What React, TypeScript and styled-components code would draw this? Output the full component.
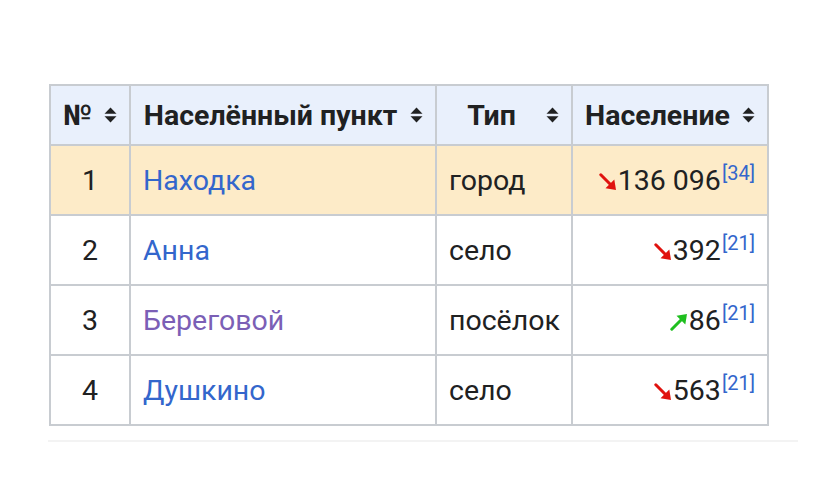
import React from "react";
import styled, { createGlobalStyle } from "styled-components";

const GlobalStyle = createGlobalStyle`
  html, body { margin: 0; padding: 0; background: #ffffff; }
  body { font-family: Roboto, "Noto Sans", "Liberation Sans", sans-serif; color: #202122; }
`;

const Page = styled.div`
  width: 816px;
  height: 504px;
  box-sizing: border-box;
  padding: 84px 0 0 49px;
  background: #fff;
`;

const Table = styled.table`
  border-collapse: collapse;
  table-layout: fixed;
  width: 718px;
  font-size: 28.5px;
  border: 2px solid #c8ccd1;
`;

const HeadCell = styled.th<{ $w: number }>`
  width: ${(p) => p.$w}px;
  height: 60px;
  padding: 0 12px;
  box-sizing: border-box;
  background: #e9f0fc;
  border: 2px solid #c8ccd1;
  font-weight: 700;
  color: #202122;
  white-space: nowrap;
`;

const HeadInner = styled.div`
  display: flex;
  align-items: center;
`;

const HeadLabel = styled.span`
  flex: 1;
  text-align: center;
`;

const SortIcon = styled.svg`
  flex: none;
  width: 13px;
  height: 16px;
  margin-left: 12px;
`;

const Row = styled.tr<{ $hl?: boolean }>`
  background: ${(p) => (p.$hl ? "#fdebc8" : "#ffffff")};
`;

const Cell = styled.td<{ $align?: "left" | "center" | "right" }>`
  height: 70px;
  padding: 0 12px;
  box-sizing: border-box;
  border: 2px solid #c8ccd1;
  text-align: ${(p) => p.$align ?? "left"};
  white-space: nowrap;
  color: #202122;
`;

const Link = styled.a<{ $visited?: boolean }>`
  color: ${(p) => (p.$visited ? "#7b5fb6" : "#3366cc")};
  text-decoration: none;
`;

const Ref = styled.sup`
  font-size: 20px;
  line-height: 1;
  color: #3366cc;
  vertical-align: 10px;
  margin-left: 1px;
`;

const Arrow = styled.svg`
  width: 18px;
  height: 18px;
  vertical-align: -1px;
  margin-right: 1px;
`;

const Divider = styled.div`
  width: 750px;
  height: 2px;
  margin-top: 14px;
  margin-left: -1px;
  background: #f3f3f3;
`;

const Sort = () => (
  <SortIcon viewBox="0 0 13 16">
    <path d="M0.5 6.8 L6.5 0.5 L12.5 6.8 Z" fill="#202122" />
    <path d="M0.5 9.2 L6.5 15.5 L12.5 9.2 Z" fill="#202122" />
  </SortIcon>
);

const Down = () => (
  <Arrow viewBox="0 0 18 18">
    <path d="M1.8 1.8 L12 12" stroke="#e0120e" strokeWidth="3" strokeLinecap="round" />
    <path d="M17 17 L6.5 15.3 L15.3 6.5 Z" fill="#e0120e" />
  </Arrow>
);

const Up = () => (
  <Arrow viewBox="0 0 18 18">
    <path d="M1.8 16.2 L12 6" stroke="#1fbf1f" strokeWidth="3" strokeLinecap="round" />
    <path d="M17 1 L6.5 2.7 L15.3 11.5 Z" fill="#1fbf1f" />
  </Arrow>
);

type Item = {
  n: number;
  name: string;
  visited?: boolean;
  type: string;
  pop: string;
  up?: boolean;
  ref: string;
  hl?: boolean;
};

const rows: Item[] = [
  { n: 1, name: "Находка", type: "город", pop: "136 096", ref: "34", hl: true },
  { n: 2, name: "Анна", type: "село", pop: "392", ref: "21" },
  { n: 3, name: "Береговой", visited: true, type: "посёлок", pop: "86", up: true, ref: "21" },
  { n: 4, name: "Душкино", type: "село", pop: "563", ref: "21" },
];

const headers: { label: string; w: number }[] = [
  { label: "№", w: 80 },
  { label: "Населённый пункт", w: 306 },
  { label: "Тип", w: 136 },
  { label: "Население", w: 196 },
];

export default function App() {
  return (
    <Page>
      <GlobalStyle />
      <Table>
        <thead>
          <tr>
            {headers.map((h) => (
              <HeadCell key={h.label} $w={h.w}>
                <HeadInner>
                  <HeadLabel>{h.label}</HeadLabel>
                  <Sort />
                </HeadInner>
              </HeadCell>
            ))}
          </tr>
        </thead>
        <tbody>
          {rows.map((r) => (
            <Row key={r.n} $hl={r.hl}>
              <Cell $align="center">{r.n}</Cell>
              <Cell>
                <Link href="#" $visited={r.visited}>{r.name}</Link>
              </Cell>
              <Cell>{r.type}</Cell>
              <Cell $align="right">
                {r.up ? <Up /> : <Down />}
                {r.pop}
                <Ref>[{r.ref}]</Ref>
              </Cell>
            </Row>
          ))}
        </tbody>
      </Table>
      <Divider />
    </Page>
  );
}
